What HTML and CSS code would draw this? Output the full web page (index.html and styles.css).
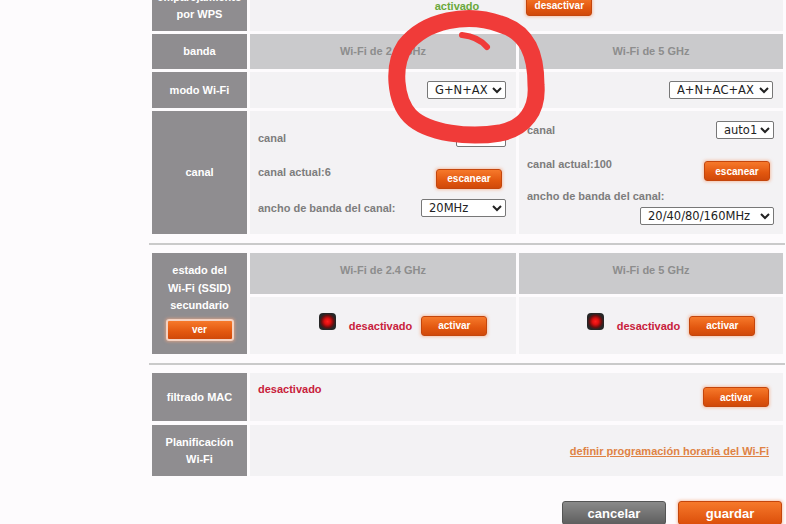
FILE: index.html
```html
<!DOCTYPE html>
<html lang="es">
<head>
    <meta charset="UTF-8">
    <title>Wi-Fi - configuración avanzada</title>
    <link rel="stylesheet" href="styles.css">
</head>
<body>
    <div class="page">
        <div class="grid main">
            <div class="label">emparejamiento<br>por WPS</div>
            <div class="cell span wps">
                <span class="on">activado</span>
                <button class="btn">desactivar</button>
            </div>

            <div class="label">banda</div>
            <div class="head">Wi-Fi de 2.4 GHz</div>
            <div class="head">Wi-Fi de 5 GHz</div>

            <div class="label">modo Wi-Fi</div>
            <div class="cell end">
                <select class="sel w-mode24"><option>G+N+AX</option></select>
            </div>
            <div class="cell end">
                <select class="sel w-mode5"><option>A+N+AC+AX</option></select>
            </div>

            <div class="label">canal</div>
            <div class="cell chan">
                <div class="line">
                    <span>canal</span>
                    <select class="sel w-chan24"><option>auto</option></select>
                </div>
                <div class="line top">
                    <span>canal actual:6</span>
                    <button class="btn scan">escanear</button>
                </div>
                <div class="line">
                    <span>ancho de banda del canal:</span>
                    <select class="sel w-bw24"><option>20MHz</option></select>
                </div>
            </div>
            <div class="cell chan">
                <div class="line">
                    <span>canal</span>
                    <select class="sel w-chan5"><option>auto1</option></select>
                </div>
                <div class="line top">
                    <span>canal actual:100</span>
                    <button class="btn scan">escanear</button>
                </div>
                <div class="text-line">ancho de banda del canal:</div>
                <div class="line end">
                    <select class="sel w-bw5"><option>20/40/80/160MHz</option></select>
                </div>
            </div>
        </div>

        <div class="rule"></div>

        <div class="grid ssid">
            <div class="label tall">
                <span>estado del<br>Wi-Fi (SSID)<br>secundario</span>
                <button class="btn ver">ver</button>
            </div>
            <div class="head high">Wi-Fi de 2.4 GHz</div>
            <div class="head high">Wi-Fi de 5 GHz</div>
            <div class="cell state">
                <span class="led"></span>
                <span class="off">desactivado</span>
                <button class="btn">activar</button>
            </div>
            <div class="cell state">
                <span class="led"></span>
                <span class="off">desactivado</span>
                <button class="btn">activar</button>
            </div>
        </div>

        <div class="rule"></div>

        <div class="grid two">
            <div class="label">filtrado MAC</div>
            <div class="cell mac">
                <span class="off">desactivado</span>
                <button class="btn">activar</button>
            </div>
            <div class="label">Planificación<br>Wi-Fi</div>
            <div class="cell sched">
                <a href="#" class="link">definir programación horaria del Wi-Fi</a>
            </div>
        </div>

        <div class="actions">
            <button class="big grey">cancelar</button>
            <button class="big orange">guardar</button>
        </div>
    </div>

    <!-- marca dibujada a mano sobre la captura -->
    <svg class="scribble" width="786" height="524" viewBox="0 0 786 524">
        <path d="M500 24 C468 12 425 20 405 46 C392 66 395 100 410 116 C428 134 470 138 500 133 C525 128 538 110 536 85 C536 55 528 32 500 24 Z"
              fill="none" stroke="#f03b39" stroke-width="17" stroke-linejoin="round"/>
        <path d="M487 47 C481 40 472 36 462 35" fill="none" stroke="#f03b39" stroke-width="6" stroke-linecap="round"/>
    </svg>
</body>
</html>
```

FILE: styles.css
```css
body {
    margin: 0;
    height: 524px;
    overflow: hidden;
    position: relative;
    background: #fdfbfd;
    font-family: 'Liberation Sans', Arial, sans-serif;
    font-size: 11px;
    font-weight: bold;
    color: #7d7d7d;
}
.page {
    width: 636px;
    margin-left: 149px;
    margin-top: -20px;
}
.grid {
    display: grid;
    grid-template-columns: 95px 266px 264px;
    gap: 3px;
    margin-left: 3px;
    width: 631px;
}
.grid.main {
    grid-template-rows: 51px 35px 36px 123px;
}
.grid.ssid {
    grid-template-rows: 41px 57px;
}
.grid.two {
    grid-template-columns: 95px 1fr;
    grid-template-rows: 48px 51px;
    gap: 4px 3px;
}
.label {
    background: #8f8d90;
    color: #fff;
    display: flex;
    flex-direction: column;
    align-items: center;
    justify-content: center;
    text-align: center;
    line-height: 17px;
}
.label.tall {
    grid-row: span 2;
    line-height: 17.5px;
    padding-bottom: 4px;
}
.head {
    background: #cacacc;
    color: #8d8d8d;
    display: flex;
    align-items: center;
    justify-content: center;
    padding-bottom: 2px;
}
.head.high {
    padding-bottom: 8px;
}
.cell {
    background: #f3f2f4;
    display: flex;
    align-items: center;
}
.cell.span {
    grid-column: span 2;
}
.cell.end {
    justify-content: flex-end;
    padding-right: 10px;
}
.wps {
    justify-content: center;
    gap: 47px;
    padding-right: 6px;
}
.on {
    color: #6aa83a;
}
.off {
    color: #c8213b;
}
.sel {
    font-family: 'DejaVu Sans', sans-serif;
    font-size: 11.5px;
    font-weight: normal;
    color: #222;
    height: 18px;
    padding: 0 0 0 3px;
    border: 1px solid #777;
    border-radius: 2px;
    background: #fff;
}
.w-mode24 { width: 79px; }
.w-mode5 { width: 104px; }
.w-chan24 { width: 50px; }
.w-chan5 { width: 58px; }
.w-bw24 { width: 85px; }
.w-bw5 { width: 134px; }

.chan {
    flex-direction: column;
    align-items: stretch;
    justify-content: center;
    padding: 0 10px 0 8px;
}
.chan + .chan {
    padding-right: 9px;
}
.line {
    display: flex;
    justify-content: space-between;
    align-items: center;
    height: 20px;
}
.line.top {
    align-items: flex-start;
    height: 23px;
    margin: 18px 0 9px;
}
.line.end {
    justify-content: flex-end;
    margin-top: 4px;
    height: 18px;
}
.text-line {
    line-height: 13px;
}
.btn {
    width: 66px;
    height: 20px;
    padding: 0;
    border: 1px solid #c4460c;
    border-radius: 3px;
    background: linear-gradient(#f6792b, #e2570f 60%, #d0490a);
    box-shadow: 0 0 3px 1px rgba(245, 165, 125, 0.6);
    color: #fff;
    font-family: 'Liberation Sans', Arial, sans-serif;
    font-size: 10px;
    font-weight: bold;
}
.btn.scan {
    margin-top: 3px;
    margin-right: 4px;
}
.btn.ver {
    width: 68px;
    height: 22px;
    margin-top: 4px;
    border: 2px solid #f4d2c2;
}
.state {
    justify-content: center;
    padding-left: 40px;
}
.led {
    width: 17px;
    height: 17px;
    border-radius: 4px;
    margin-bottom: 9px;
    background: radial-gradient(circle, #ff1f1f 0, #e01010 3px, #6a1010 6px, #262626 8px);
}
.state .off {
    margin: 0 9px 0 13px;
}
.mac {
    justify-content: space-between;
    padding: 0 14px 0 8px;
}
.mac .off {
    align-self: flex-start;
    margin-top: 10px;
}
.cell.sched {
    justify-content: flex-end;
    padding-right: 14px;
}
.link {
    color: #df8345;
    text-decoration: underline;
}
.rule {
    height: 2px;
    background: #cacaca;
    margin: 9px 0 8px;
}
.actions {
    display: flex;
    justify-content: flex-end;
    gap: 12px;
    margin-top: 25px;
    padding-right: 3px;
}
.big {
    width: 104px;
    height: 24px;
    padding: 0;
    border-radius: 3px;
    color: #fff;
    font-family: 'Liberation Sans', Arial, sans-serif;
    font-size: 13px;
    font-weight: bold;
}
.big.grey {
    border: 1px solid #555;
    background: linear-gradient(#8a8a8a, #5e5e5e);
}
.big.orange {
    border: 1px solid #c4460c;
    background: linear-gradient(#f6792b, #dc4f0a);
    box-shadow: 0 0 3px 1px rgba(245, 165, 125, 0.6);
}
.scribble {
    position: absolute;
    top: 0;
    left: 0;
    pointer-events: none;
}
```
